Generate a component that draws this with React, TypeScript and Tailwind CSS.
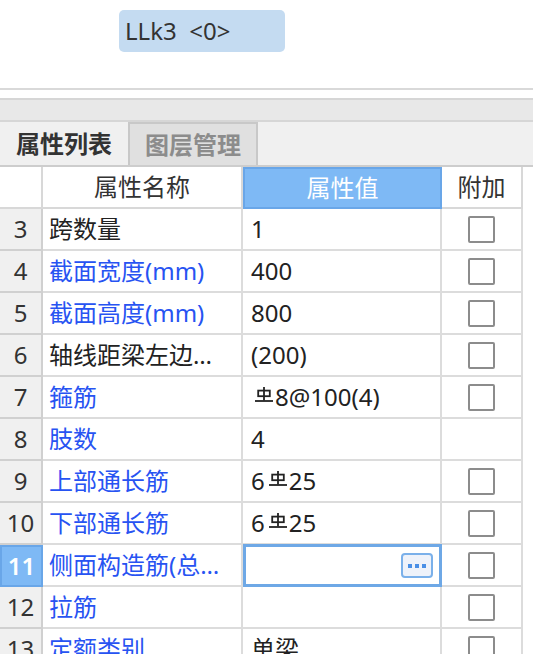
import React from 'react';

type Row = {
  n: number;
  name: string;
  blue: boolean;
  value?: React.ReactNode;
  check: boolean;
  selected?: boolean;
};

// grade III rebar mark (not in any installed font)
function SteelMark() {
  return (
    <svg width="18" height="15" viewBox="0 0 18 15" className="mb-[5px] ml-[4px] mr-[2px] shrink-0">
      <line x1="9" y1="0" x2="9" y2="13.5" stroke="#222" strokeWidth="1.8" />
      <rect x="3.2" y="3.6" width="11.6" height="5.6" fill="none" stroke="#222" strokeWidth="1.8" />
      <line x1="0" y1="14" x2="18" y2="14" stroke="#222" strokeWidth="1.8" />
    </svg>
  );
}

const rows: Row[] = [
  { n: 3, name: '跨数量', blue: false, value: '1', check: true },
  { n: 4, name: '截面宽度(mm)', blue: true, value: '400', check: true },
  { n: 5, name: '截面高度(mm)', blue: true, value: '800', check: true },
  { n: 6, name: '轴线距梁左边线距离(mm)', blue: false, value: '(200)', check: true },
  {
    n: 7,
    name: '箍筋',
    blue: true,
    value: (
      <>
        <SteelMark />
        <span>8@100(4)</span>
      </>
    ),
    check: true,
  },
  { n: 8, name: '肢数', blue: true, value: '4', check: false },
  {
    n: 9,
    name: '上部通长筋',
    blue: true,
    value: (
      <>
        <span>6</span>
        <SteelMark />
        <span>25</span>
      </>
    ),
    check: true,
  },
  {
    n: 10,
    name: '下部通长筋',
    blue: true,
    value: (
      <>
        <span>6</span>
        <SteelMark />
        <span>25</span>
      </>
    ),
    check: true,
  },
  { n: 11, name: '侧面构造筋(总配筋值)', blue: true, check: true, selected: true },
  { n: 12, name: '拉筋', blue: true, value: '', check: true },
  { n: 13, name: '定额类别', blue: true, value: '单梁', check: true },
];

function Checkbox() {
  return <div className="h-[27px] w-[27px] rounded-[2px] border-2 border-[#8c8c8c] bg-white" />;
}

export default function App() {
  return (
    <div className="h-[654px] w-[533px] overflow-hidden bg-white font-['Noto_Sans','Noto_Sans_CJK_SC',sans-serif] text-[24px] text-[#222]">
      {/* drawing area */}
      <div className="h-[88px] pl-[119px] pt-[10px]">
        <div className="flex h-[42px] w-[166px] items-center rounded-[5px] bg-[#c4dbf1] pl-[6px] leading-none whitespace-pre text-[#333]">
          {'LLk3  <0>'}
        </div>
      </div>
      <div className="h-[2px] bg-[#d9d9d9]" />
      <div className="h-[8px] bg-white" />
      <div className="h-[2px] bg-[#d6d6d6]" />
      <div className="h-[20px] bg-[#e8e8e8]" />
      <div className="h-[2px] bg-[#d6d6d6]" />

      {/* tabs */}
      <div className="flex h-[45px] border-b-2 border-[#cdcdcd] bg-[#f0f0f0]">
        <div className="flex w-[128px] items-center justify-center font-bold text-[#333]">属性列表</div>
        <div className="flex w-[130px] items-center justify-center border-x-2 border-t-2 border-[#c8c8c8] bg-[#e0e0e0] font-bold text-[#8c8c8c]">
          图层管理
        </div>
      </div>

      {/* property table */}
      <div className="grid w-[523px] grid-cols-[43px_200px_199px_81px]">
        <div className="h-[42px] border-r-2 border-b-2 border-[#d8d8d8] bg-white" />
        <div className="flex h-[42px] items-center justify-center border-r-2 border-b-2 border-[#d8d8d8] text-[#333]">
          属性名称
        </div>
        <div className="flex h-[42px] items-center justify-center border-2 border-[#69a6e8] bg-[#7eb9f5] text-white">
          属性值
        </div>
        <div className="flex h-[42px] items-center justify-center border-r-2 border-b-2 border-[#d8d8d8] text-[#333]">
          附加
        </div>

        {rows.map((r) => (
          <React.Fragment key={r.n}>
            <div
              className={
                r.selected
                  ? 'flex h-[42px] items-center justify-center border-2 border-[#69a6e8] bg-[#7eb9f5] font-semibold text-white'
                  : 'flex h-[42px] items-center justify-center border-r-2 border-b-2 border-[#d0d0d0] bg-[#f0f0f0] text-[#333]'
              }
            >
              {r.n}
            </div>
            <div className="flex h-[42px] min-w-0 items-center border-r-2 border-b-2 border-[#dcdcdc] pl-[6px] pr-[9px]">
              <span className={`truncate ${r.blue ? 'text-[#2753f2]' : 'text-[#222]'}`}>{r.name}</span>
            </div>
            {r.selected ? (
              <div className="-mt-[1px] flex h-[43px] items-center justify-end border-[3px] border-[#6ea8e6] bg-white pr-[6px]">
                <div className="flex h-[25px] w-[32px] items-center justify-center gap-[3px] rounded-[4px] border-2 border-[#7ab0ea] bg-[#eef2fa]">
                  <span className="h-[4px] w-[4px] bg-[#4a8fe6]" />
                  <span className="h-[4px] w-[4px] bg-[#4a8fe6]" />
                  <span className="h-[4px] w-[4px] bg-[#4a8fe6]" />
                </div>
              </div>
            ) : (
              <div className="flex h-[42px] items-center border-r-2 border-b-2 border-[#dcdcdc] pl-[8px] text-[#222]">
                {r.value}
              </div>
            )}
            <div className="flex h-[42px] items-center justify-center border-r-2 border-b-2 border-[#dcdcdc]">
              {r.check && <Checkbox />}
            </div>
          </React.Fragment>
        ))}
      </div>
    </div>
  );
}
